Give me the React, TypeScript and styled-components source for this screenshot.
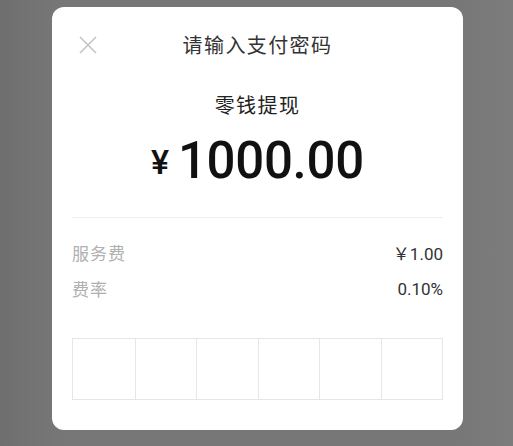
import { createGlobalStyle } from 'styled-components'
import styled from 'styled-components'

const GlobalStyle = createGlobalStyle`
	html, body {
		margin: 0;
		padding: 0;
		background: #777777;
		font-family: Roboto, "Noto Sans CJK SC", sans-serif;
	}
`

const fees = [
	{ label: '服务费', value: '￥1.00' },
	{ label: '费率', value: '0.10%' },
]

export default function App() {
	return (
		<>
			<GlobalStyle />
			<Screen>
				<Dialog>
					<Header>
						<CloseButton aria-label='关闭'>
							<svg width='18' height='18' viewBox='0 0 18 18'>
								<path d='M1 1L17 17M17 1L1 17' stroke='#c4c4c4' strokeWidth='1.6' />
							</svg>
						</CloseButton>
						<Title>请输入支付密码</Title>
					</Header>
					<Purpose>零钱提现</Purpose>
					<Amount>
						<Currency>¥</Currency>1000.00
					</Amount>
					<Divider />
					<FeeList>
						{fees.map((f) => (
							<FeeRow key={f.label}>
								<FeeLabel>{f.label}</FeeLabel>
								<FeeValue>{f.value}</FeeValue>
							</FeeRow>
						))}
					</FeeList>
					<PinBoxes>
						{Array.from({ length: 6 }).map((_, i) => (
							<PinCell key={i} $first={i === 0} />
						))}
					</PinBoxes>
				</Dialog>
			</Screen>
		</>
	)
}

const Screen = styled.div`
	width: 513px;
	height: 446px;
	padding: 7px 0 0 52px;
	box-sizing: border-box;
	background: linear-gradient(90deg, #6f6f6f 0%, #777 12%, #777 88%, #7c7c7c 100%);
`

const Dialog = styled.div`
	width: 411px;
	height: 423px;
	box-sizing: border-box;
	background: #ffffff;
	border-radius: 12px;
	padding: 0 20px;
	display: flex;
	flex-direction: column;
`

const Header = styled.div`
	position: relative;
	height: 74px;
	display: flex;
	align-items: center;
	justify-content: center;
`

const CloseButton = styled.div`
	position: absolute;
	left: 7px;
	top: 29px;
	width: 18px;
	height: 18px;
	display: flex;
`

const Title = styled.div`
	font-size: 20px;
	letter-spacing: 1.4px;
	color: #333;
	margin-top: 1px;
`

const Purpose = styled.div`
	margin-top: 11px;
	text-align: center;
	font-size: 20px;
	letter-spacing: 1.4px;
	line-height: 28px;
	color: #222;
`

const Amount = styled.div`
	margin-top: 11px;
	text-align: center;
	font-family: Roboto, sans-serif;
	font-weight: 500;
	font-size: 51px;
	line-height: 60px;
	color: #111;
	letter-spacing: -0.3px;
`

const Currency = styled.span`
	font-size: 34px;
	margin-right: 9px;
	vertical-align: 4px;
`

const Divider = styled.div`
	margin-top: 25px;
	height: 1px;
	background: #efefef;
`

const FeeList = styled.div`
	margin-top: 23px;
	display: flex;
	flex-direction: column;
	gap: 13px;
`

const FeeRow = styled.div`
	display: flex;
	justify-content: space-between;
	align-items: center;
	height: 23px;
	font-size: 17px;
`

const FeeLabel = styled.span`
	color: #b0b0b0;
	letter-spacing: 1px;
`

const FeeValue = styled.span`
	color: #333;
`

const PinBoxes = styled.div`
	margin-top: 38px;
	display: grid;
	grid-template-columns: repeat(6, 1fr);
	height: 62px;
	border: 1px solid #e6e6e6;
	box-sizing: border-box;
`

const PinCell = styled.div<{ $first: boolean }>`
	border-left: ${(p) => (p.$first ? 'none' : '1px solid #e6e6e6')};
`
